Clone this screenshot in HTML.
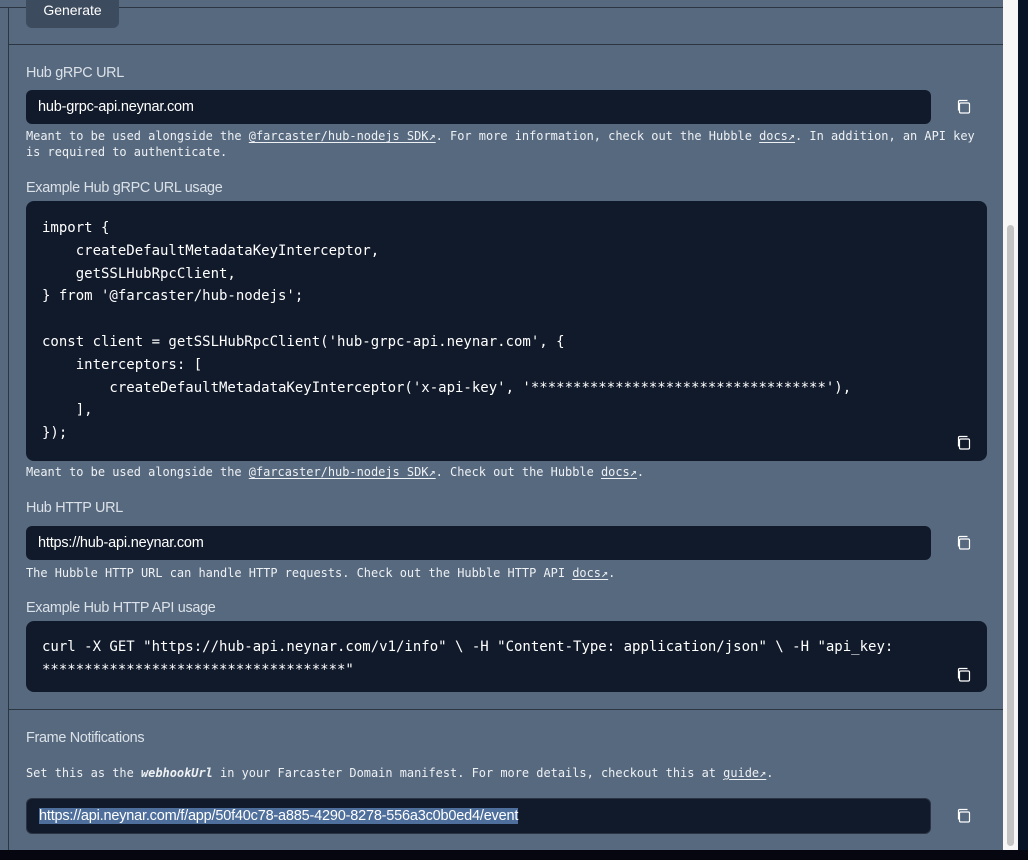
<!DOCTYPE html>
<html><head><meta charset="utf-8"><style>
*{margin:0;padding:0;box-sizing:border-box}
body{width:1028px;height:860px;overflow:hidden;background:#061426;position:relative;font-family:"Liberation Sans",sans-serif}
#page{position:absolute;left:0;top:0;width:1003px;height:850px;background:#57697f}
#bottom{position:absolute;left:0;top:850px;width:1028px;height:10px;background:#05060f}
#sb{position:absolute;left:1003px;top:0;width:15px;height:850px;background:#f7f7f7}
#thumb{position:absolute;left:1007px;top:225px;width:7px;height:621px;background:#c3c3c3;border-radius:4px}
.vl{position:absolute;left:8px;top:7px;width:1px;height:843px;background:#2c3542}
.hl{position:absolute;left:0;height:1px;background:#2c3542}
.a{position:absolute}
.lbl{position:absolute;left:26px;font-size:14.4px;color:#dbe1e8;letter-spacing:-0.3px;line-height:16px}
.inp{position:absolute;left:26px;width:905px;background:#111a2b;border-radius:6px;color:#fff;font-size:14.5px;padding-left:12px;letter-spacing:-0.2px}
.help{position:absolute;left:26px;font-family:"DejaVu Sans Mono","Liberation Mono",monospace;font-size:11.95px;color:#eef1f4;line-height:16px;white-space:pre}
.help u{text-underline-offset:2px}
.code{position:absolute;left:26px;width:961px;background:#111a2b;border-radius:8px;color:#fff;font-family:"DejaVu Sans Mono","Liberation Mono",monospace;font-size:14px;font-weight:500;line-height:22.8px;white-space:pre;padding-left:16px}
.ic{position:absolute;width:16px;height:16px}
</style></head><body>
<div id="page"></div>
<div class="hl" style="top:7px;width:1003px"></div>
<div class="vl"></div>
<div class="hl" style="left:9px;top:44px;width:994px"></div>
<div class="hl" style="left:9px;top:709px;width:994px"></div>
<div class="a" style="left:26px;top:-8px;width:93px;height:36px;background:#3d4b5e;border-radius:6px;color:#fff;font-size:14px;text-align:center;line-height:36px">Generate</div>

<div class="lbl" style="top:65px">Hub gRPC URL</div>
<div class="inp" style="top:90px;height:34px;line-height:34px">hub-grpc-api.neynar.com</div>
<div class="help" style="top:128px">Meant to be used alongside the <u>@farcaster/hub-nodejs SDK↗</u>. For more information, check out the Hubble <u>docs↗</u>. In addition, an API key
is required to authenticate.</div>
<div class="lbl" style="top:180px">Example Hub gRPC URL usage</div>
<div class="code" style="top:201px;height:260px;padding-top:16px">import {
    createDefaultMetadataKeyInterceptor,
    getSSLHubRpcClient,
} from '@farcaster/hub-nodejs';

const client = getSSLHubRpcClient('hub-grpc-api.neynar.com', {
    interceptors: [
        createDefaultMetadataKeyInterceptor('x-api-key', '***********************************'),
    ],
});</div>
<div class="help" style="top:464px">Meant to be used alongside the <u>@farcaster/hub-nodejs SDK↗</u>. Check out the Hubble <u>docs↗</u>.</div>

<div class="lbl" style="top:500px">Hub HTTP URL</div>
<div class="inp" style="top:526px;height:34px;line-height:34px">https://hub-api.neynar.com</div>
<div class="help" style="top:565px">The Hubble HTTP URL can handle HTTP requests. Check out the Hubble HTTP API <u>docs↗</u>.</div>
<div class="lbl" style="top:600px">Example Hub HTTP API usage</div>
<div class="code" style="top:621px;height:71px;padding-top:15px">curl -X GET "https://hub-api.neynar.com/v1/info" \ -H "Content-Type: application/json" \ -H "api_key:
************************************"</div>

<div class="lbl" style="top:730px">Frame Notifications</div>
<div class="help" style="top:765px">Set this as the <b><i>webhookUrl</i></b> in your Farcaster Domain manifest. For more details, checkout this at <u>guide↗</u>.</div>
<div class="inp" style="top:798px;height:36px;line-height:34px;border:1px solid #2a3443"><span style="background:#4e6f9b">https://api.neynar.com/f/app/50f40c78-a885-4290-8278-556a3c0b0ed4/event</span></div>

<svg class="ic" style="left:955px;top:99px" viewBox="0 0 16 16" fill="none" stroke="#fff" stroke-width="1.2"><path d="M3.5 11.5V2.5a1 1 0 0 1 1-1h8"/><rect x="4.5" y="4" width="10" height="10" rx="1.3"/></svg>
<svg class="ic" style="left:955px;top:435px" viewBox="0 0 16 16" fill="none" stroke="#fff" stroke-width="1.2"><path d="M3.5 11.5V2.5a1 1 0 0 1 1-1h8"/><rect x="4.5" y="4" width="10" height="10" rx="1.3"/></svg>
<svg class="ic" style="left:955px;top:535px" viewBox="0 0 16 16" fill="none" stroke="#fff" stroke-width="1.2"><path d="M3.5 11.5V2.5a1 1 0 0 1 1-1h8"/><rect x="4.5" y="4" width="10" height="10" rx="1.3"/></svg>
<svg class="ic" style="left:955px;top:667px" viewBox="0 0 16 16" fill="none" stroke="#fff" stroke-width="1.2"><path d="M3.5 11.5V2.5a1 1 0 0 1 1-1h8"/><rect x="4.5" y="4" width="10" height="10" rx="1.3"/></svg>
<svg class="ic" style="left:955px;top:808px" viewBox="0 0 16 16" fill="none" stroke="#fff" stroke-width="1.2"><path d="M3.5 11.5V2.5a1 1 0 0 1 1-1h8"/><rect x="4.5" y="4" width="10" height="10" rx="1.3"/></svg>

<div id="sb"></div><div id="thumb"></div>
<div id="bottom"></div>
</body></html>
